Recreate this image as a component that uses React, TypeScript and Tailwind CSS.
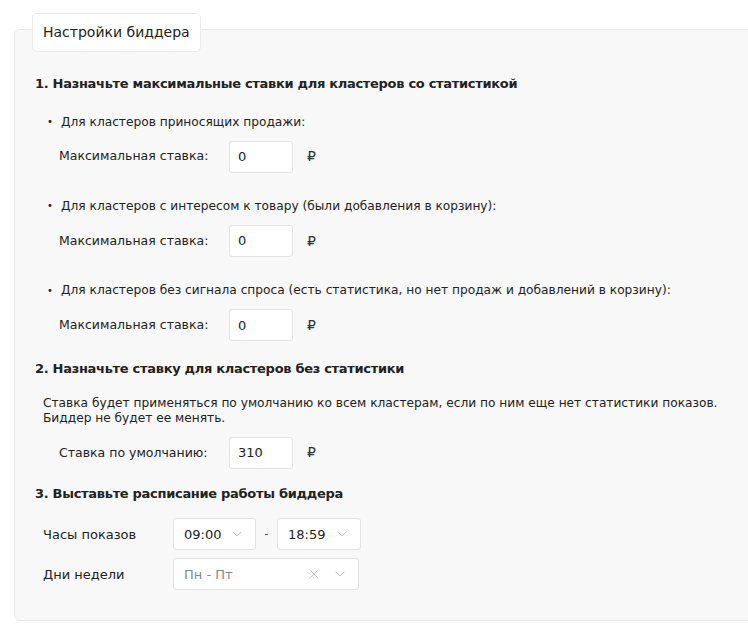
import { ChevronDown, X } from "lucide-react";

const font = { fontFamily: '"DejaVu Sans", sans-serif' };

function BidInput({ value }: { value: string }) {
  return (
    <div className="flex items-center gap-[14px]">
      <div className="w-[64px] h-[32px] bg-white border border-[#e3e3e3] rounded-[3px] flex items-center pl-[8px] text-[13px] text-[#222]">
        {value}
      </div>
      <span className="text-[14px] text-[#333]">₽</span>
    </div>
  );
}

function BidBlock({ title }: { title: string }) {
  return (
    <div>
      <div className="flex items-center text-[12.2px] text-[#222] pl-[12px]">
        <span className="w-[14px] text-[10px]">•</span>
        {title}
      </div>
      <div className="flex items-center mt-[10px] pl-[24px]">
        <span className="w-[170px] text-[12.5px] text-[#222]">Максимальная ставка:</span>
        <BidInput value="0" />
      </div>
    </div>
  );
}

function Select({ value, w, muted, clear }: { value: string; w: string; muted?: boolean; clear?: boolean }) {
  return (
    <div className={`${w} h-[32px] bg-white border border-[#e3e3e3] rounded-[3px] flex items-center px-[10px] text-[13px]`}>
      <span className={muted ? "text-[#888]" : "text-[#222]"}>{value}</span>
      <div className="ml-auto flex items-center gap-[10px] text-[#bbb]">
        {clear && <X className="w-[16px] h-[16px]" strokeWidth={1.3} />}
        <ChevronDown className="w-[16px] h-[16px]" strokeWidth={1.3} />
      </div>
    </div>
  );
}

export default function App() {
  return (
    <div className="w-[748px] h-[632px] bg-white overflow-hidden relative" style={font}>
      <div className="pt-[29px] pl-[14px]">
        <div className="relative w-[760px] h-[592px] bg-[#f8f8f8] border border-[#ebebeb] rounded-[6px] pl-[20px] pr-[10px]">
          {/* tab */}
          <div className="absolute left-[17px] top-[-17px] h-[39px] px-[10px] bg-white border border-[#ebebeb] rounded-[5px] flex items-center text-[14px] text-[#222]">
            Настройки биддера
          </div>

          <div className="pt-[44px] text-[#222]">
            <h3 className="font-bold text-[13px] tracking-[-0.3px]">
              1. Назначьте максимальные ставки для кластеров со статистикой
            </h3>
            <div className="mt-[19px] flex flex-col gap-[24px]">
              <BidBlock title="Для кластеров приносящих продажи:" />
              <BidBlock title="Для кластеров с интересом к товару (были добавления в корзину):" />
              <BidBlock title="Для кластеров без сигнала спроса (есть статистика, но нет продаж и добавлений в корзину):" />
            </div>

            <h3 className="font-bold text-[13px] tracking-[-0.3px] mt-[18px]">
              2. Назначьте ставку для кластеров без статистики
            </h3>
            <p className="mt-[17px] pl-[8px] text-[12.2px] text-[#222] leading-[15px]">
              Ставка будет применяться по умолчанию ко всем кластерам, если по ним еще нет статистики показов.
              <br />
              Биддер не будет ее менять.
            </p>
            <div className="flex items-center mt-[11px] pl-[24px]">
              <span className="w-[170px] text-[12.5px] text-[#222]">Ставка по умолчанию:</span>
              <BidInput value="310" />
            </div>

            <h3 className="font-bold text-[13px] tracking-[-0.3px] mt-[15px]">
              3. Выставьте расписание работы биддера
            </h3>
            <div className="mt-[15px] pl-[8px] flex flex-col gap-[8px]">
              <div className="flex items-center">
                <span className="w-[130px] text-[13px] text-[#222]">Часы показов</span>
                <Select value="09:00" w="w-[83px]" />
                <span className="w-[21px] text-center text-[12px] text-[#555]">-</span>
                <Select value="18:59" w="w-[84px]" />
              </div>
              <div className="flex items-center">
                <span className="w-[130px] text-[13px] text-[#222]">Дни недели</span>
                <Select value="Пн - Пт" w="w-[186px]" muted clear />
              </div>
            </div>
          </div>
        </div>
      </div>
    </div>
  );
}
